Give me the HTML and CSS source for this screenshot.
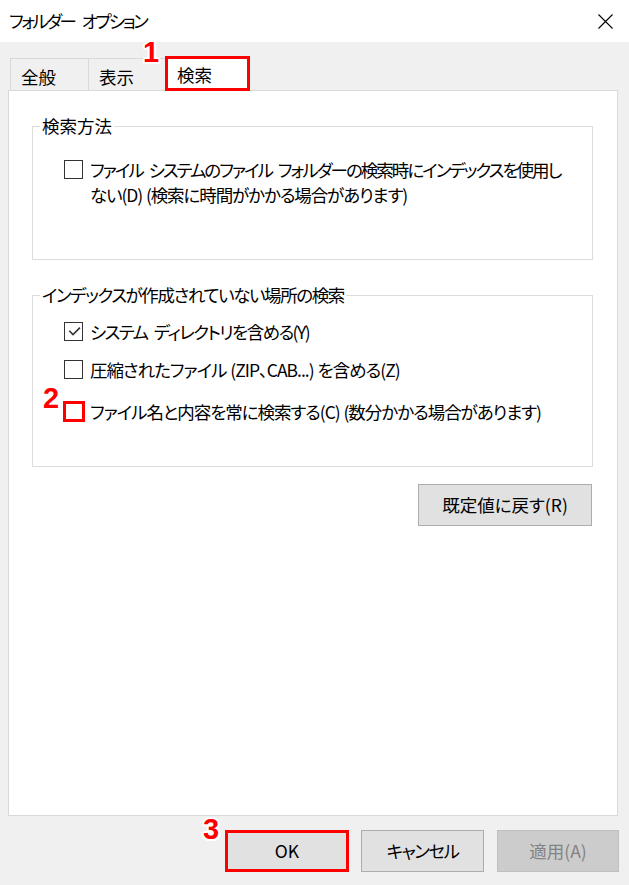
FILE: index.html
```html
<!DOCTYPE html>
<html lang="ja">
<head>
<meta charset="utf-8">
<title>フォルダー オプション</title>
<link rel="stylesheet" href="styles.css">
</head>
<body>
<div class="window">
  <div class="titlebar">
    <span class="title">フォルダー オプション</span>
    <svg class="close" width="15" height="15" viewBox="0 0 15 15"><path d="M0.5 0.5 L14.5 14.5 M14.5 0.5 L0.5 14.5" stroke="#000" stroke-width="1.1" fill="none"/></svg>
  </div>
  <div class="tabs">
    <div class="tab tab1">全般</div>
    <div class="tab tab2">表示</div>
    <div class="tab sel">検索</div>
  </div>
  <div class="panel">
    <fieldset class="group g1">
      <legend>検索方法</legend>
      <div class="row"><span class="cb"></span><span class="label"><span class="t1a">ファイル システムのファイル フォルダーの検索時にインデックスを使用し</span><br><span class="t1b">ない(D) (検索に時間がかかる場合があります)</span></span></div>
    </fieldset>
    <fieldset class="group g2">
      <legend class="lg2">インデックスが作成されていない場所の検索</legend>
      <div class="row r1"><span class="cb checked"><svg width="17" height="17" viewBox="0 0 17 17"><path d="M4.3 7.8 L8 11.6 L15 4.6" stroke="#333" stroke-width="1.6" fill="none"/></svg></span><span class="label t2">システム ディレクトリを含める(Y)</span></div>
      <div class="row r2"><span class="cb"></span><span class="label t3">圧縮されたファイル (ZIP、CAB...) を含める(Z)</span></div>
      <div class="row r3"><span class="cb red"></span><span class="label t4">ファイル名と内容を常に検索する(C) (数分かかる場合があります)</span></div>
    </fieldset>
    <div class="reset-row"><button class="btn reset">既定値に戻す(R)</button></div>
  </div>
  <div class="footer">
    <button class="btn ok">OK</button>
    <button class="btn cancel">キャンセル</button>
    <button class="btn apply">適用(A)</button>
  </div>
  <span class="mark m1">1</span>
  <span class="mark m2">2</span>
  <span class="mark m3">3</span>
</div>
</body>
</html>
```
FILE: styles.css
```css
html, body {
  margin: 0;
  padding: 0;
}
body {
  width: 629px;
  height: 885px;
  overflow: hidden;
  background: #f0f0f0;
  font-family: "Noto Sans CJK JP", "Noto Sans", sans-serif;
  font-size: 17.5px;
  font-feature-settings: "palt";
  color: #000;
}
.window {
  position: relative;
  height: 885px;
}
.titlebar {
  height: 42px;
  background: #fff;
  display: flex;
  align-items: center;
  justify-content: space-between;
  padding: 0 16px 0 9px;
  box-sizing: border-box;
}
.title {
  line-height: 24px;
  letter-spacing: -2.5px;
  word-spacing: 6px;
}
.close {
  display: block;
}
.tabs {
  display: flex;
  align-items: flex-end;
  height: 32px;
  margin: 16px 0 0 10px;
}
.tab {
  box-sizing: border-box;
  height: 32px;
  border: 1px solid #d9d9d9;
  border-bottom: none;
  padding: 6px 0 0 10px;
  line-height: 24px;
  background: #f0f0f0;
}
.tab1 {
  width: 79px;
}
.tab2 {
  width: 78px;
  margin-left: -1px;
}
.tab.sel {
  position: relative;
  z-index: 1;
  width: 85px;
  height: 35px;
  margin-left: -1px;
  margin-bottom: -1px;
  border: 3px solid #ff0000;
  padding: 4px 0 0 9px;
  background: #fff;
}
.panel {
  box-sizing: border-box;
  width: 610px;
  height: 726px;
  margin-left: 8px;
  border: 1px solid #d9d9d9;
  background: #fff;
  padding: 25px 24px 0 23px;
}
.group {
  margin: 0;
  border: 1px solid #dcdcdc;
  min-width: 0;
}
.group legend {
  padding: 0 2px;
  margin-left: -24px;
  line-height: 20px;
}
.lg2 {
  letter-spacing: -1.4px;
}
.g1 {
  padding: 21px 0 52px 31px;
}
.g2 {
  margin-top: 25px;
  padding: 14px 0 42px 31px;
}
.row {
  display: flex;
  align-items: flex-start;
  line-height: 25px;
}
.label {
  white-space: nowrap;
}
.t1a {
  letter-spacing: -1.98px;
  word-spacing: 4px;
}
.t1b {
  letter-spacing: -1.1px;
  word-spacing: 1px;
}
.t2 {
  letter-spacing: -1.56px;
  word-spacing: 4px;
}
.t3 {
  letter-spacing: -1px;
  word-spacing: 1px;
}
.t4 {
  letter-spacing: -1.05px;
  word-spacing: 1px;
}
.r2 {
  margin-top: 13px;
}
.r3 {
  margin-top: 17px;
}
.cb {
  flex: none;
  box-sizing: border-box;
  width: 19px;
  height: 19px;
  margin: 3px 7px 0 0;
  border: 1px solid #333;
  background: #fff;
}
.cb svg {
  display: block;
}
.cb.red {
  width: 22px;
  height: 21px;
  margin: 2px 5px 0 -1px;
  border: 3px solid #ff0000;
}
.reset-row {
  display: flex;
  justify-content: flex-end;
  margin-top: 17px;
  padding-right: 1px;
}
.btn {
  box-sizing: border-box;
  height: 42px;
  padding: 0;
  margin: 0;
  background: #e1e1e1;
  border: 1px solid #adadad;
  font: inherit;
  line-height: 24px;
  color: #000;
}
.reset {
  width: 174px;
}
.footer {
  display: flex;
  gap: 12px;
  margin-top: 14px;
  padding-left: 225px;
}
.ok {
  width: 124px;
  border: 3px solid #ff0000;
}
.cancel {
  width: 123px;
  letter-spacing: -1.5px;
}
.apply {
  width: 122px;
  margin-left: 1px;
  background: #cccccc;
  border-color: #bfbfbf;
  color: #838383;
}
.mark {
  position: absolute;
  font-family: "Liberation Sans", Arial, sans-serif;
  font-weight: bold;
  font-size: 29px;
  line-height: 29px;
  color: #ff0000;
  text-shadow: 2px 0 0 #fff, -2px 0 0 #fff, 0 2px 0 #fff, 0 -2px 0 #fff, 1.5px 1.5px 0 #fff, -1.5px 1.5px 0 #fff, 1.5px -1.5px 0 #fff, -1.5px -1.5px 0 #fff;
}
.m1 {
  left: 143px;
  top: 38px;
}
.m2 {
  left: 43px;
  top: 384px;
}
.m3 {
  left: 203px;
  top: 815px;
}
```
